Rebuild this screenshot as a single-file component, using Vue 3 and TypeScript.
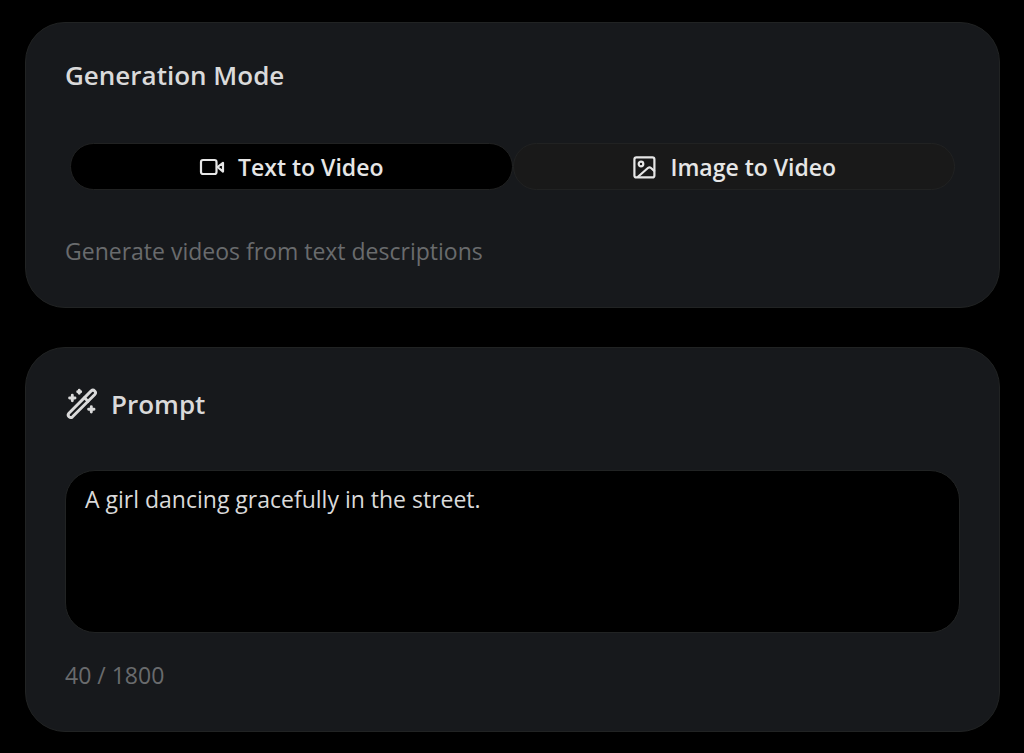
<script setup lang="ts">
import { computed, ref } from 'vue'

type Mode = 'text' | 'image'

const MAX_LENGTH = 1800
const mode = ref<Mode>('text')
const prompt = ref('A girl dancing gracefully in the street.')

const description = computed(() =>
  mode.value === 'text'
    ? 'Generate videos from text descriptions'
    : 'Generate videos from images'
)
</script>

<template>
  <main class="page">
    <section class="card">
      <h2 class="title">Generation Mode</h2>
      <div class="tabs" role="tablist" aria-label="Generation Mode">
        <button
          type="button"
          role="tab"
          class="tab"
          :class="{ active: mode === 'text' }"
          :aria-selected="mode === 'text'"
          @click="mode = 'text'"
        >
          <svg class="tab-icon" viewBox="0 0 26 26" aria-hidden="true">
            <rect x="2" y="6" width="15.5" height="14" rx="2" />
            <path d="M18.5 13 L24 8.8 V17.6 Z" />
          </svg>
          <span>Text to Video</span>
        </button>
        <button
          type="button"
          role="tab"
          class="tab"
          :class="{ active: mode === 'image' }"
          :aria-selected="mode === 'image'"
          @click="mode = 'image'"
        >
          <svg class="tab-icon" viewBox="0 0 26 26" aria-hidden="true">
            <rect x="3.4" y="3.4" width="20" height="20" rx="2" />
            <circle cx="10" cy="10" r="2.3" />
            <path d="M7 22.8 L17.2 13.8 Q18.6 12.8 20 14 L23.2 16.8" />
          </svg>
          <span>Image to Video</span>
        </button>
      </div>
      <p class="note">{{ description }}</p>
    </section>

    <section class="card">
      <h2 class="title with-icon">
        <svg class="title-icon" viewBox="-1 0 32 32" aria-hidden="true">
          <path d="M2.9 25.2 L25.2 2.9 A2.55 2.55 0 0 1 28.8 6.5 L6.5 28.8 A2.55 2.55 0 0 1 2.9 25.2 Z" />
          <path d="M18.4 9.7 L22 13.3" />
          <path d="M6.3 7.3 V12.7 M3.6 10 H9 M13.2 2.2 V5.2 M11.7 3.7 H14.7 M25.3 18.6 V24 M22.6 21.3 H28" />
        </svg>
        <label for="prompt">Prompt</label>
      </h2>
      <textarea id="prompt" v-model="prompt" class="prompt" :maxlength="MAX_LENGTH" spellcheck="false"></textarea>
      <p class="note counter">{{ prompt.length }} / {{ MAX_LENGTH }}</p>
    </section>
  </main>
</template>

<style>
body {
  margin: 0;
  background: #000;
}
</style>

<style scoped>
.page {
  display: flex;
  flex-direction: column;
  gap: 39px;
  padding: 22px 24px 21px 25px;
  font-family: 'Open Sans', 'Noto Sans', sans-serif;
  color: #dadada;
}

.card {
  padding: 32px 39px 38px;
  border: 1px solid #212323;
  border-radius: 40px;
  background: #17191c;
}

.title {
  display: flex;
  align-items: center;
  gap: 14px;
  margin: 0;
  font-size: 26px;
  line-height: 40px;
  font-weight: 600;
}

.with-icon {
  min-height: 48px;
}

svg {
  flex: none;
  overflow: visible;
  fill: none;
  stroke: currentColor;
  stroke-width: 2;
  stroke-linecap: round;
  stroke-linejoin: round;
}

.title-icon {
  width: 32px;
  height: 32px;
  stroke-width: 2.9;
}

.tabs {
  display: grid;
  grid-template-columns: 1fr 1fr;
  margin-top: 43px;
  padding: 5px;
  border-radius: 28px;
}

.tab {
  display: flex;
  align-items: center;
  justify-content: center;
  gap: 13px;
  height: 47px;
  padding: 0;
  border: 1px solid #212222;
  border-radius: 24px;
  background: #191919;
  color: #e6e6e6;
  font: 600 23px / 32px 'Open Sans', 'Noto Sans', sans-serif;
  cursor: pointer;
}

.tab.active {
  background: #000;
}

.tab-icon {
  width: 26px;
  height: 26px;
  stroke-width: 2.2;
}

.note {
  margin: 38px 0 0;
  color: #696b6d;
  font-size: 23px;
  line-height: 36px;
}

.prompt {
  display: block;
  box-sizing: border-box;
  width: 100%;
  height: 163px;
  margin-top: 42px;
  padding: 11px 19px;
  border: 1px solid #212323;
  border-radius: 30px;
  outline: none;
  resize: none;
  background: #000;
  color: #dadada;
  font: 400 23px / 34px 'Open Sans', 'Noto Sans', sans-serif;
}

.counter {
  margin-top: 24px;
}
</style>
